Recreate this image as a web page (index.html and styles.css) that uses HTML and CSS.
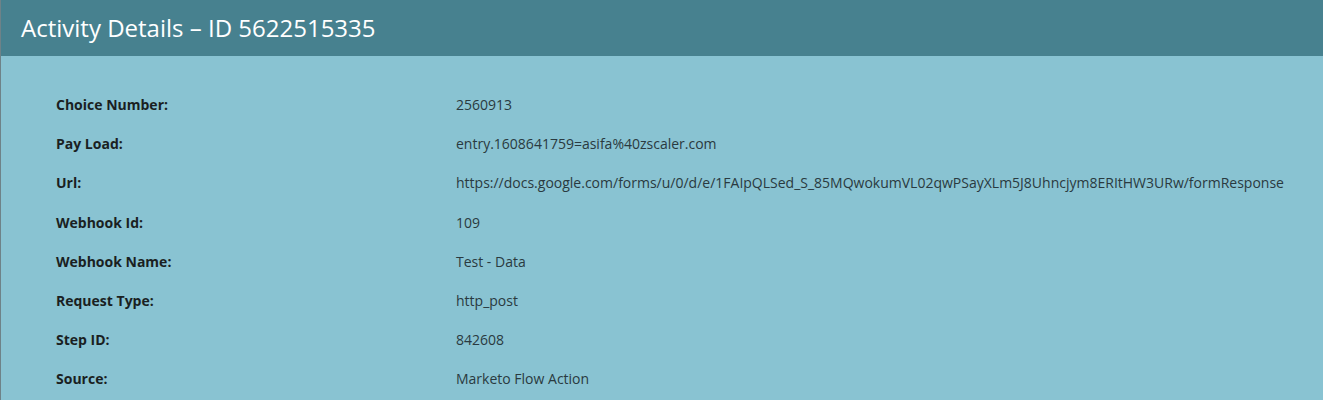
FILE: index.html
```html
<!DOCTYPE html>
<html>
<head>
<meta charset="utf-8">
<link rel="stylesheet" href="styles.css">
</head>
<body>
<div class="panel">
  <div class="header">Activity Details – ID 5622515335</div>
  <div class="content">
    <div class="row"><div class="label">Choice Number:</div><div class="value">2560913</div></div>
    <div class="row"><div class="label">Pay Load:</div><div class="value">entry.1608641759=asifa%40zscaler.com</div></div>
    <div class="row"><div class="label">Url:</div><div class="value">https://docs.google.com/forms/u/0/d/e/1FAIpQLSed_S_85MQwokumVL02qwPSayXLm5J8Uhncjym8ERItHW3URw/formResponse</div></div>
    <div class="row"><div class="label">Webhook Id:</div><div class="value">109</div></div>
    <div class="row"><div class="label">Webhook Name:</div><div class="value">Test - Data</div></div>
    <div class="row"><div class="label">Request Type:</div><div class="value">http_post</div></div>
    <div class="row"><div class="label">Step ID:</div><div class="value">842608</div></div>
    <div class="row"><div class="label">Source:</div><div class="value">Marketo Flow Action</div></div>
  </div>
</div>
</body>
</html>
```
FILE: styles.css
```css
html, body {
  margin: 0;
  padding: 0;
  height: 100%;
}
body {
  font-family: "Open Sans", "DejaVu Sans", sans-serif;
  background: #89c3d2;
  overflow: hidden;
}
.panel {
  border-left: 1px solid #6e8288;
  min-height: 100%;
  box-sizing: border-box;
  background: #89c3d2;
}
.header {
  height: 56px;
  background: #47818f;
  color: #ffffff;
  font-size: 24px;
  padding-left: 20px;
  box-sizing: border-box;
  padding-top: 3px;
  line-height: 50px;
}
.content {
  padding-top: 29px;
  padding-left: 55px;
}
.row {
  display: flex;
  height: 39.2px;
  align-items: center;
  font-size: 14px;
  color: #1f2d33;
}
.label {
  width: 400px;
  font-weight: 700;
  color: #1a1f22;
}
.value {
  color: #2a3a40;
  white-space: nowrap;
}
```
